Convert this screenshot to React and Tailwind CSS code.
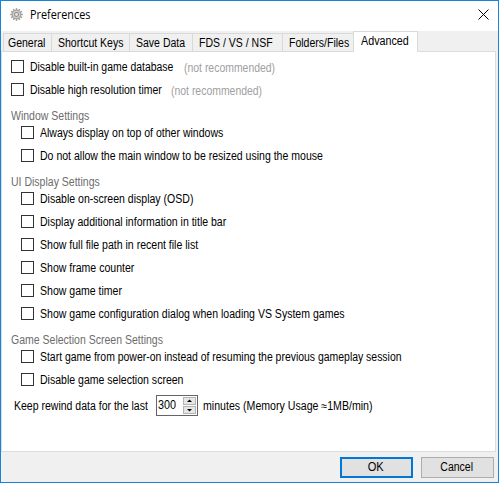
import React from "react";

const topRows = [
  { text: "Disable built-in game database", w: "w-[154px]" },
  { text: "Disable high resolution timer", w: "w-[141px]" },
];

const groups = [
  {
    title: "Window Settings",
    rows: [
      "Always display on top of other windows",
      "Do not allow the main window to be resized using the mouse",
    ],
  },
  {
    title: "UI Display Settings",
    rows: [
      "Disable on-screen display (OSD)",
      "Display additional information in title bar",
      "Show full file path in recent file list",
      "Show frame counter",
      "Show game timer",
      "Show game configuration dialog when loading VS System games",
    ],
  },
  {
    title: "Game Selection Screen Settings",
    rows: [
      "Start game from power-on instead of resuming the previous gameplay session",
      "Disable game selection screen",
    ],
  },
];

const tabs = [
  ["General", "w-[48px] pl-[4px]"],
  ["Shortcut Keys", "w-[78px] pl-[6px]"],
  ["Save Data", "w-[63px] pl-[6px]"],
  ["FDS / VS / NSF", "w-[90px] pl-[6px]"],
  ["Folders/Files", "w-[71px] pl-[6px]"],
];

// Slightly condensed interface text
function T({ children, scale = "scale-x-[0.876]", origin = "origin-left" }) {
  return <span className={`inline-block ${origin} ${scale}`}>{children}</span>;
}

function Box() {
  return <span className="size-[13px] shrink-0 border border-[#333333] bg-white" />;
}

function Gear() {
  const teeth = [0, 30, 60, 90, 120, 150, 180, 210, 240, 270, 300, 330];
  return (
    <svg width="13" height="13" viewBox="0 0 14 14" className="ml-[9px] mt-[7px] shrink-0">
      {teeth.map((a) => (
        <rect key={a} x="6.2" y="0.2" width="1.6" height="2.6" fill="#9a9b95" transform={`rotate(${a} 7 7)`} />
      ))}
      <circle cx="7" cy="7" r="4.6" fill="#cfd0cb" stroke="#9a9b95" strokeWidth="1" />
      <circle cx="7" cy="7" r="2.1" fill="#e8e8e5" stroke="#8b8d86" strokeWidth="1.1" />
    </svg>
  );
}

export default function App() {
  return (
    <div className="flex h-[483px] w-[499px] flex-col overflow-hidden whitespace-nowrap border border-[#1883d7] bg-[#f0f0f0] font-['Liberation_Sans',Arial,sans-serif] text-[12px] leading-4 text-black">
      <header className="flex h-[30px] shrink-0 bg-white">
        <Gear />
        <span className="ml-[7px] mt-[6px] origin-left scale-x-[0.905] font-['Open_Sans','Noto_Sans',sans-serif] text-[12px]">Preferences</span>
        <svg width="11" height="11" viewBox="0 0 11 11" className="ml-auto mr-[9px] mt-[8px]" stroke="#000" strokeWidth="1">
          <path d="M0.5 0.5 10.5 10.5M10.5 0.5 0.5 10.5" />
        </svg>
      </header>

      <nav className="relative z-10 -mb-px flex h-[21px] shrink-0 items-end pl-[2px]">
        {tabs.map(([label, w]) => (
          <div key={label} className={`h-[19px] border-y border-l border-[#d9d9d9] ${w}`}>
            <div className="pt-px"><T>{label}</T></div>
          </div>
        ))}
        <div className="h-[21px] w-[65px] border border-b-0 border-[#d9d9d9] bg-white pl-[7px]">
          <div className="pt-px"><T scale="scale-x-[0.895]">Advanced</T></div>
        </div>
      </nav>

      <main className="mr-[2px] h-[401px] shrink-0 border border-[#dcdcdc] bg-white pt-[3px]">
        {topRows.map((r) => (
          <label key={r.text} className="flex h-[23px] items-center pl-[9px]">
            <Box />
            <span className={`ml-[6px] ${r.w}`}><T scale="scale-x-[0.87]">{r.text}</T></span>
            <span className="mt-[2px] text-[#a0a0a0]"><T scale="scale-x-[0.87]">(not recommended)</T></span>
          </label>
        ))}

        {groups.map((g) => (
          <section key={g.title}>
            <h2 className="flex h-5 items-end pl-[9px] text-[#6d6d6d]">
              <span className="-mb-[3px]"><T>{g.title}</T></span>
            </h2>
            {g.rows.map((text) => (
              <label key={text} className="flex h-[23px] items-center pl-[19px]">
                <Box />
                <span className="ml-[6px]">
                  <T scale={text.startsWith("Start") ? "scale-x-[0.87]" : "scale-x-[0.878]"}>{text}</T>
                </span>
              </label>
            ))}
          </section>
        ))}

        <div className="mt-[4px] flex h-[21px] pl-3">
          <span className="mt-[3px] w-[142px]"><T>Keep rewind data for the last</T></span>
          <div className="flex h-[21px] w-[42px] justify-between border border-[#646464] bg-white pl-px">
            <span className="mt-px"><T scale="scale-x-[0.9]">300</T></span>
            <div className="flex w-[14px] flex-col gap-px pr-px pt-px">
              {["M2 4h5L4.5 1.5z", "M2 2h5L4.5 4.5z"].map((d) => (
                <span key={d} className="flex h-[8px] items-center justify-center border border-[#b4b4b4] bg-[#e6e6e6]">
                  <svg width="9" height="6" viewBox="0 0 9 6">
                    <path d={d} fill="#000" />
                  </svg>
                </span>
              ))}
            </div>
          </div>
          <span className="ml-[5px] mt-[3px]"><T scale="scale-x-[0.883]">minutes (Memory Usage ≈1MB/min)</T></span>
        </div>
      </main>

      <footer className="flex justify-end gap-2 pr-[4px] pt-[5px]">
        <button className="h-[21px] w-[73px] border-2 border-[#0078d7] bg-[#e1e1e1] pr-px leading-[17px]">
          <T scale="scale-x-[0.92]" origin="origin-center">OK</T>
        </button>
        <button className="h-[21px] w-[73px] border border-[#adadad] bg-[#e1e1e1] pr-[2px] leading-[19px]">
          <T origin="origin-center">Cancel</T>
        </button>
      </footer>
    </div>
  );
}
